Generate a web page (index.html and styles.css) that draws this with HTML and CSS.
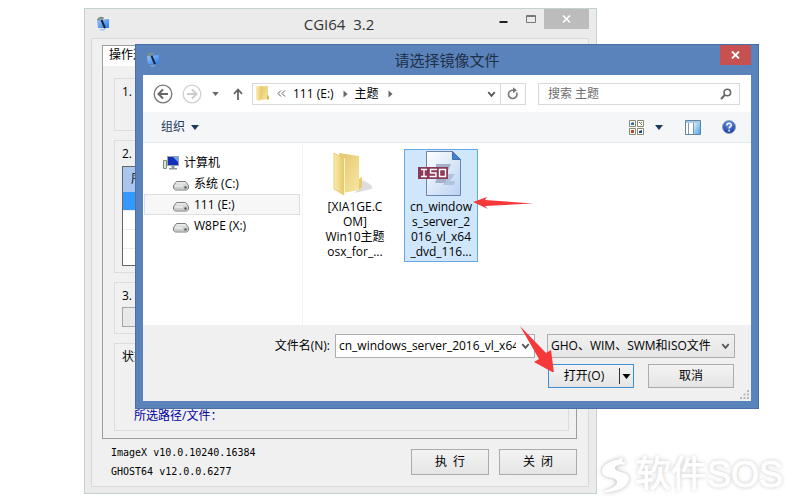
FILE: index.html
```html
<!DOCTYPE html>
<html lang="zh-CN">
<head>
    <meta charset="UTF-8">
    <meta name="viewport" content="width=device-width, initial-scale=1.0">
    <title>CGI64 3.2</title>
    <link rel="stylesheet" href="styles.css">
</head>
<body>
    <svg class="defs" width="0" height="0" aria-hidden="true">
        <defs>
            <linearGradient id="appBlue" x1="0" y1="0" x2="1" y2="1">
                <stop offset="0" stop-color="#9cc8fa"/>
                <stop offset="1" stop-color="#2f7bea"/>
            </linearGradient>
            <linearGradient id="driveTop" x1="0" y1="0" x2="0" y2="1">
                <stop offset="0" stop-color="#f4f4f4"/>
                <stop offset="1" stop-color="#a9abad"/>
            </linearGradient>
            <linearGradient id="folderFront" x1="0" y1="0" x2="1" y2="0">
                <stop offset="0" stop-color="#fbeeb0"/>
                <stop offset="1" stop-color="#e6c765"/>
            </linearGradient>
            <linearGradient id="folderBack" x1="0" y1="0" x2="1" y2="1">
                <stop offset="0" stop-color="#e3c66c"/>
                <stop offset="1" stop-color="#f7e6a2"/>
            </linearGradient>
            <linearGradient id="page" x1="0" y1="0" x2="1" y2="1">
                <stop offset="0" stop-color="#ffffff"/>
                <stop offset="1" stop-color="#b9d2f2"/>
            </linearGradient>
            <linearGradient id="pane" x1="0" y1="0" x2="1" y2="1">
                <stop offset="0" stop-color="#d8f0fd"/>
                <stop offset="1" stop-color="#4aa3e8"/>
            </linearGradient>
            <radialGradient id="help" cx="0.5" cy="0.3" r="0.7">
                <stop offset="0" stop-color="#6f9bea"/>
                <stop offset="1" stop-color="#16349b"/>
            </radialGradient>
            <symbol id="app" viewBox="0 0 14 16">
                <path d="M1 4l12-1v9H2z" fill="url(#appBlue)"/>
                <path d="M1 4c1-3 4-4 7-2.500l-1 2-2-.5-2 1.500z" fill="#7d9090"/>
                <path d="M4.500 4l2-.5L10 12l-2 .5z" fill="#17263a"/>
                <path d="M3 13l7-.5-2 2.500H5z" fill="#7fb0f3" opacity=".5"/>
            </symbol>
            <symbol id="drive" viewBox="0 0 16 11">
                <path d="M3.500 1.500h9l3 4v3l-2 1.500h-11l-2-1.500v-3z" fill="url(#driveTop)" stroke="#7b7d80"/>
                <path d="M1 5.500h14v3l-1.500 1h-11L1 8.500z" fill="#c9cbcc"/>
                <path d="M11.500 6.500h2v2h-2z" fill="#3d4a44"/>
                <path d="M2 6h8" stroke="#fff"/>
            </symbol>
            <symbol id="chevron" viewBox="0 0 8 8">
                <path d="M.8 2.200L4 5.800l3.200-3.600" fill="none" stroke="#555" stroke-width="1.800"/>
            </symbol>
            <symbol id="down" viewBox="0 0 8 5">
                <path d="M0 0h8L4 5z" fill="currentColor"/>
            </symbol>
            <symbol id="right" viewBox="0 0 5 8">
                <path d="M.5.5v7l4-3.500z" fill="#666"/>
            </symbol>
        </defs>
    </svg>

    <!-- main program window -->
    <section class="window main-window">
        <header class="title-bar">
            <svg class="app-icon" width="14" height="16"><use href="#app"/></svg>
            <h1 class="title">CGI64&nbsp; 3.2</h1>
            <div class="window-buttons">
                <button class="win-btn" aria-label="最小化">
                    <svg width="9" height="10" viewBox="0 0 9 10"><path d="M.5 7h8v2h-8z" fill="#222"/></svg>
                </button>
                <button class="win-btn" aria-label="最大化">
                    <svg width="10" height="8" viewBox="0 0 10 8"><path d="M.5.5h9v7h-9zM.5 1.500h9" fill="none" stroke="#777"/></svg>
                </button>
                <button class="win-btn win-close" aria-label="关闭窗口">
                    <svg width="9" height="8" viewBox="0 0 9 8"><path d="M1 .5l7 7M8 .5l-7 7" stroke="#fff" stroke-width="1.600"/></svg>
                </button>
            </div>
        </header>
        <div class="client">
            <div class="tab-panel">
                <div class="tab-head">操作选</div>
                <div class="groups">
                    <div class="group group-backup">1. 请</div>
                    <div class="group group-disk">
                        <span>2. 请</span>
                        <div class="disk-list">
                            <div class="disk-head">序</div>
                            <div class="disk-row disk-selected"></div>
                            <div class="disk-row"></div>
                            <div class="disk-row"></div>
                            <div class="disk-row"></div>
                        </div>
                    </div>
                    <div class="group group-path">
                        <span>3. 请</span>
                        <div class="path-box"></div>
                    </div>
                    <div class="group group-status">
                        <span>状态</span>
                        <p class="status-line">所选路径/文件：</p>
                    </div>
                </div>
            </div>
            <footer class="main-footer">
                <div class="versions">
                    <p>ImageX v10.0.10240.16384</p>
                    <p>GHOST64 v12.0.0.6277</p>
                </div>
                <button class="btn main-btn">执&nbsp; 行</button>
                <button class="btn main-btn">关&nbsp; 闭</button>
            </footer>
        </div>
    </section>

    <!-- file picker -->
    <section class="window dialog">
        <header class="dialog-title">
            <svg class="app-icon" width="14" height="16"><use href="#app"/></svg>
            <h2 class="title">请选择镜像文件</h2>
            <button class="dialog-close" aria-label="关闭对话框">
                <svg width="9" height="8" viewBox="0 0 9 8"><path d="M1 .5l7 7M8 .5l-7 7" stroke="#fff" stroke-width="1.800"/></svg>
            </button>
        </header>
        <div class="dialog-client">
            <nav class="nav-row">
                <button class="icon-btn" aria-label="后退">
                    <svg width="20" height="20" viewBox="0 0 20 20"><circle cx="10" cy="10" r="8.800" fill="#fff" stroke="#777" stroke-width="1.300"/><path d="M15 10H6M10 5.500L5.500 10l4.500 4.500" fill="none" stroke="#666" stroke-width="2"/></svg>
                </button>
                <button class="icon-btn" aria-label="前进">
                    <svg width="20" height="20" viewBox="0 0 20 20"><circle cx="10" cy="10" r="8.800" fill="#fff" stroke="#d0d0d0" stroke-width="1.300"/><path d="M5 10h9M10 5.500l4.500 4.500-4.500 4.500" fill="none" stroke="#ccc" stroke-width="2"/></svg>
                </button>
                <button class="icon-btn history" aria-label="历史记录">
                    <svg width="7" height="4"><use href="#down"/></svg>
                </button>
                <button class="icon-btn" aria-label="向上">
                    <svg width="10" height="12" viewBox="0 0 10 12"><path d="M5 12V2M1 5.800L5 1.500l4 4.300" fill="none" stroke="#666" stroke-width="1.800"/></svg>
                </button>
                <div class="address">
                    <svg width="15" height="17" viewBox="0 0 15 17">
                        <path d="M5 1.500l8-.5v13l-6 1z" fill="url(#folderBack)"/>
                        <path d="M1 1.500l6-.5v13l-3 2-3-1.500z" fill="url(#folderFront)"/>
                        <path d="M12 10l2 1v3l-2 1z" fill="#d8b850"/>
                    </svg>
                    <svg width="9" height="7" viewBox="0 0 9 7"><path d="M4 .5l-3 3 3 3M8 .5l-3 3 3 3" fill="none" stroke="#555"/></svg>
                    <span>111 (E:)</span>
                    <svg width="5" height="8"><use href="#right"/></svg>
                    <span>主题</span>
                    <svg width="5" height="8"><use href="#right"/></svg>
                    <svg class="address-drop" width="9" height="8"><use href="#chevron"/></svg>
                    <button class="refresh" aria-label="刷新">
                        <svg width="12" height="13" viewBox="0 0 12 13"><path d="M9.500 5.500A4.200 4.200 0 1 1 5 3.200h3" fill="none" stroke="#777" stroke-width="1.600"/><path d="M6 .2l4 3-4 3z" fill="#777"/></svg>
                    </button>
                </div>
                <div class="search">
                    <input type="search" placeholder="搜索 主题" aria-label="搜索 主题">
                    <svg width="12" height="12" viewBox="0 0 12 12"><circle cx="7.300" cy="4.500" r="3.300" fill="none" stroke="#666" stroke-width="1.600"/><path d="M4.800 7L1 11" stroke="#666" stroke-width="2"/></svg>
                </div>
            </nav>
            <div class="toolbar">
                <button class="organize">组织 <svg width="8" height="5"><use href="#down"/></svg></button>
                <div class="tools">
                    <button class="icon-btn" aria-label="更改视图">
                        <svg width="15" height="15" viewBox="0 0 15 15">
                            <path d="M.5.5h6v6h-6zM8.500.5h6v6h-6zM.5 8.500h6v6h-6zM8.500 8.500h6v6h-6z" fill="#fff" stroke="#8a8a70"/>
                            <path d="M2 3l2-1 1 1v2H2z" fill="#2a6fa0"/>
                            <path d="M10 2l3 3M13 2l-2 2" stroke="#5a8a50"/>
                            <path d="M2 10h3v3H2z" fill="#c8451c"/>
                            <path d="M10 11l3-1v3h-3z" fill="#1c4c86"/>
                        </svg>
                    </button>
                    <button class="icon-btn views-drop" aria-label="更多视图">
                        <svg width="8" height="5"><use href="#down"/></svg>
                    </button>
                    <button class="icon-btn preview" aria-label="预览窗格">
                        <svg width="16" height="15" viewBox="0 0 16 15">
                            <path d="M.5.5h15v14H.5z" fill="#fff" stroke="#5f84a3"/>
                            <path d="M1 1h14v2H1z" fill="#a9c9e2"/>
                            <path d="M9 3h6v11H9z" fill="url(#pane)"/>
                            <path d="M3.500 3v11M8.500 3v11" stroke="#8298aa"/>
                        </svg>
                    </button>
                    <button class="icon-btn" aria-label="帮助">
                        <svg width="14" height="14" viewBox="0 0 14 14">
                            <circle cx="7" cy="7" r="6.500" fill="url(#help)" stroke="#8fa3c8"/>
                            <path d="M4.800 5.400C4.800 2.500 9.400 2.600 9.300 5.200 9.200 6.700 7.100 6.700 7.100 8.600M7.100 9.800v1.600" fill="none" stroke="#fff" stroke-width="1.500"/>
                        </svg>
                    </button>
                </div>
            </div>
            <div class="browser">
                <ul class="tree">
                    <li class="tree-root">
                        <svg width="17" height="14" viewBox="0 0 17 14">
                            <path d="M.5 4.500h3v8h-3z" fill="#dce6d8" stroke="#7d8a80"/>
                            <path d="M4.500.5h11v9h-11z" fill="#1430b8" stroke="#9aa2ae"/>
                            <path d="M10 1h5v5z" fill="#6ea0f4"/>
                            <path d="M8.500 10h3v2h-3zM6 12h8v1.500H6z" fill="#8c949c"/>
                        </svg>
                        计算机
                    </li>
                    <li><svg width="16" height="11"><use href="#drive"/></svg>系统 (C:)</li>
                    <li class="tree-current"><svg width="16" height="11"><use href="#drive"/></svg>111 (E:)</li>
                    <li><svg width="16" height="11"><use href="#drive"/></svg>W8PE (X:)</li>
                </ul>
                <div class="files">
                    <div class="file">
                        <svg width="48" height="48" viewBox="0 0 48 48">
                            <path d="M24 43l16-4c4-2-2-6-8-9z" fill="#aaa" opacity=".4"/>
                            <path d="M8 3l20 3v34l-16 3z" fill="url(#folderBack)"/>
                            <path d="M28 29l3-2v10l-3 3z" fill="#e5ca72"/>
                            <path d="M3 3l10 6v36L3 39z" fill="url(#folderFront)" stroke="#e5cd7a"/>
                            <path d="M13 9l1-1v35l-1 2z" fill="#fff3c4"/>
                        </svg>
                        <span>[XIA1GE.C<br>OM]<br>Win10主题<br>osx_for_...</span>
                    </div>
                    <div class="file file-selected">
                        <svg width="56" height="48" viewBox="0 0 56 48">
                            <path d="M13.500 1.500h26l8 8v36h-34z" fill="url(#page)" stroke="#6c84ad"/>
                            <path d="M39.500 1.500v8h8z" fill="#3b84d8" stroke="#4a6ea8"/>
                            <path d="M23 14h15l-2 5-7 9h5l-1 5H22l2-5 7-9h-8z" fill="#a3b2ca"/>
                            <path d="M32 24h10l-5 7h5l-1 4H30l5-7h-4z" fill="#b0c2de"/>
                            <path d="M5 17h30v12H5z" fill="#8b3a58"/>
                            <path d="M8 19.500h6M11 19.500v7M8 26.500h6M24 19.500h-6.500v3.500H23v3.500h-6.500M26.500 19.500h6v7h-6z" fill="none" stroke="#fff" stroke-width="1.400"/>
                        </svg>
                        <span>cn_window<br>s_server_2<br>016_vl_x64<br>_dvd_116...</span>
                        <svg class="arrow-left" width="60" height="14" viewBox="0 0 60 14">
                            <path d="M0 6L14 1l-2 3 48 3.500L12 10l3 3z" fill="#f5383a"/>
                        </svg>
                    </div>
                </div>
            </div>
            <div class="dialog-footer">
                <div class="field-row">
                    <label for="fileName">文件名(N):</label>
                    <div class="combo">
                        <input id="fileName" type="text" value="cn_windows_server_2016_vl_x64_dvd_11636695.iso">
                        <svg width="9" height="8"><use href="#chevron"/></svg>
                    </div>
                    <div class="filter">
                        <select aria-label="文件类型">
                            <option>GHO、WIM、SWM和ISO文件</option>
                        </select>
                        <svg width="9" height="8"><use href="#chevron"/></svg>
                    </div>
                </div>
                <div class="action-row">
                    <div class="open-wrap">
                        <button class="btn open-btn">
                            <span>打开(O)</span>
                            <svg width="9" height="5"><use href="#down"/></svg>
                        </button>
                        <svg class="arrow-down" width="34" height="46" viewBox="0 0 34 46">
                            <path d="M0 0l26 27 5-3 3 23-20-11 5-3z" fill="#f5383a"/>
                        </svg>
                    </div>
                    <button class="btn cancel-btn">取消</button>
                </div>
                <svg class="grip" width="9" height="9" viewBox="0 0 9 9">
                    <path d="M7 0h2v2H7zM3.500 3.500h2v2h-2zM7 3.500h2v2H7zM0 7h2v2H0zM3.500 7h2v2h-2zM7 7h2v2H7z" fill="#b8b8b8"/>
                </svg>
            </div>
        </div>
    </section>

    <div class="watermark">
        <svg width="32" height="38" viewBox="0 0 32 38">
            <path d="M22 3C12 4 2 9 3 16c1 7 15 4 15 10 0 4-7 7-15 10 13 1 26-4 27-13 1-8-14-6-14-11 0-2 3-3 7-4z" fill="#fff"/>
            <path d="M21 1l3 2-1 3 4-1-2 4-4-1-1-3z" fill="#fff"/>
        </svg>
        <span>软件SOS</span>
    </div>
</body>
</html>
```
FILE: styles.css
```css
* {
    box-sizing: border-box;
}
body {
    margin: 0;
    background-color: #ffffff;
    color: #000;
    font-family: "Open Sans", "Noto Sans CJK SC", sans-serif;
    font-size: 12px;
    line-height: 16px;
}
h1, h2, p, ul {
    margin: 0;
    padding: 0;
}
svg {
    display: block;
    flex: none;
}
.defs {
    position: absolute;
}
button {
    font: inherit;
    color: inherit;
    border: none;
    background: none;
    padding: 0;
}
input, select {
    font: inherit;
    color: inherit;
    border: none;
    outline: none;
    background: none;
    padding: 0;
    min-width: 0;
}
.window {
    position: absolute;
}
.title {
    flex: 1;
    text-align: center;
    font-size: 15px;
    font-weight: normal;
    line-height: 20px;
}

/* main window */
.main-window {
    top: 8px;
    left: 84px;
    right: 199px;
    background-color: #ebebeb;
    border: 1px solid #c3d3cb;
    padding: 0 7px 6px 6px;
}
.title-bar {
    display: flex;
    align-items: center;
    height: 29px;
    padding-left: 5px;
    color: #333;
}
.title-bar .title {
    padding-left: 78px;
}
.window-buttons {
    display: flex;
    align-self: flex-start;
}
.win-btn {
    display: flex;
    align-items: center;
    justify-content: center;
    width: 27px;
    height: 20px;
}
.win-close {
    width: 45px;
    background-color: #bcbcbc;
}
.client {
    background-color: #f0f0f0;
    border: 1px solid #d9d9d9;
    padding: 6px 11px 5px 10px;
}
.tab-panel {
    border: 1px solid #9d9d9d;
    background-color: #f0f0f0;
}
.tab-head {
    height: 20px;
    padding: 1px 6px;
    background-color: #ffffff;
}
.groups {
    display: flex;
    flex-direction: column;
    gap: 9px;
    padding: 12px 7px 7px 11px;
}
.group {
    border: 1px solid #dcdcdc;
    padding: 5px 6px 5px 7px;
}
.group-backup {
    height: 53px;
}
.group-disk {
    height: 133px;
}
.group-path {
    height: 52px;
}
.group-status {
    height: 88px;
}
.disk-list {
    height: 100px;
    margin-top: 4px;
    border: 1px solid #666;
    background-color: #ffffff;
}
.disk-head {
    height: 25px;
    padding: 4px 8px;
    background-color: #aac6f0;
}
.disk-row {
    height: 19px;
    border-bottom: 1px solid #ececec;
}
.disk-row:last-child {
    border-bottom: none;
}
.disk-selected {
    background-color: #3399ff;
}
.path-box {
    height: 20px;
    margin-top: 3px;
    border: 1px solid #a5a5a5;
    background-color: #e8e8e8;
}
.status-line {
    padding: 43px 0 0 12px;
    color: #0000a0;
}
.main-footer {
    display: flex;
    align-items: center;
    gap: 10px;
    padding-top: 4px;
}
.versions {
    flex: 1;
    padding-left: 9px;
    font-family: "DejaVu Sans Mono", monospace;
    font-size: 10px;
    line-height: 19px;
}
.btn {
    border: 1px solid #acacac;
    background: linear-gradient(#f3f3f3, #e5e5e5);
}
.main-btn {
    width: 78px;
    height: 26px;
}

/* file dialog */
.dialog {
    top: 44px;
    left: 135px;
    right: 37px;
    padding: 0 7px 7px;
    background-color: #5a82bb;
    border: 1px solid #4a6fa5;
}
.dialog-title {
    display: flex;
    align-items: center;
    height: 30px;
    padding-left: 3px;
    color: #1f2f45;
}
.dialog-title .title {
    padding-left: 14px;
}
.dialog-close {
    display: flex;
    align-items: center;
    justify-content: center;
    align-self: flex-start;
    width: 31px;
    height: 20px;
    background-color: #c75050;
}
.dialog-client {
    background-color: #ffffff;
}
.nav-row {
    display: flex;
    align-items: center;
    height: 37px;
    padding: 0 11px 0 10px;
    gap: 9px;
}
.icon-btn {
    display: flex;
    align-items: center;
    color: #1d3a5c;
}
.history {
    padding: 0 5px 0 1px;
    color: #666;
}
.address {
    flex: 1;
    display: flex;
    align-items: center;
    gap: 7px;
    height: 22px;
    padding-left: 2px;
    border: 1px solid #d9d9d9;
}
.address span {
    padding-right: 2px;
    white-space: nowrap;
}
.address-drop {
    margin-left: auto;
}
.refresh {
    display: flex;
    align-items: center;
    justify-content: center;
    align-self: stretch;
    width: 25px;
    border-left: 1px solid #d9d9d9;
    margin-left: -3px;
}
.search {
    display: flex;
    align-items: center;
    width: 202px;
    height: 22px;
    margin-left: 3px;
    padding: 0 7px 0 9px;
    border: 1px solid #d9d9d9;
}
.search input {
    flex: 1;
}
.search input::placeholder {
    color: #6d6d6d;
}
.toolbar {
    display: flex;
    align-items: center;
    justify-content: space-between;
    height: 31px;
    padding: 0 15px 0 18px;
    background-color: #f4f6f8;
    border-bottom: 1px solid #dfe7ef;
}
.organize {
    display: flex;
    align-items: center;
    gap: 6px;
    color: #1e395b;
}
.tools {
    display: flex;
    align-items: center;
}
.views-drop {
    padding: 0 22px 0 11px;
}
.preview {
    padding-right: 21px;
}
.browser {
    display: flex;
    height: 182px;
}
.tree {
    width: 160px;
    padding-top: 9px;
    border-right: 1px solid #f3f3f3;
    list-style: none;
}
.tree li {
    display: flex;
    align-items: center;
    gap: 5px;
    height: 21px;
    margin: 0 2px 0 1px;
    padding-left: 28px;
    border: 1px solid transparent;
}
.tree li svg {
    margin-top: 4px;
}
.tree .tree-root {
    gap: 4px;
    padding-left: 18px;
}
.tree .tree-root svg {
    margin-top: 0;
}
.tree .tree-current {
    background-color: #f7f7f7;
    border-color: #dedede;
}
.files {
    display: flex;
    align-items: flex-start;
    gap: 12px;
    padding: 6px 15px;
}
.file {
    position: relative;
    display: flex;
    flex-direction: column;
    align-items: center;
    gap: 1px;
    width: 74px;
    height: 113px;
    border: 1px solid transparent;
    text-align: center;
    line-height: 15px;
    white-space: nowrap;
}
.file-selected {
    border-color: #66a7e8;
    background-color: #cfe6fb;
}
.arrow-left {
    position: absolute;
    left: 68px;
    top: 46px;
}
.dialog-footer {
    position: relative;
    padding: 9px 16px 13px;
    background-color: #f0f0f0;
}
.field-row, .action-row {
    display: flex;
    align-items: center;
    justify-content: flex-end;
}
.field-row label {
    margin-right: 5px;
}
.combo {
    display: flex;
    align-items: center;
    width: 200px;
    height: 24px;
    margin-right: 12px;
    padding: 0 4px 0 3px;
    border: 1px solid #abadb3;
    background-color: #ffffff;
}
.combo input {
    width: 177px;
    margin-right: auto;
}
.filter {
    display: flex;
    align-items: center;
    width: 188px;
    height: 24px;
    padding: 0 4px 0 3px;
    border: 1px solid #acacac;
    background: linear-gradient(#f0f0f0, #e5e5e5);
}
.filter select {
    appearance: none;
    flex: 1;
    margin-right: 5px;
    overflow: hidden;
    text-overflow: clip;
}
.action-row {
    gap: 14px;
    padding: 6px 1px 0 0;
}
.open-wrap {
    position: relative;
}
.open-btn {
    display: flex;
    align-items: center;
    width: 86px;
    height: 24px;
    border-color: #3c8fd4;
}
.open-btn span {
    flex: 1;
    text-align: center;
    border-right: 1px solid #333;
}
.open-btn svg {
    margin: 0 2px;
}
.cancel-btn {
    width: 86px;
    height: 24px;
}
.arrow-down {
    position: absolute;
    left: -28px;
    top: -38px;
}
.grip {
    position: absolute;
    right: 2px;
    bottom: 2px;
}

.watermark {
    position: absolute;
    right: 13px;
    top: 454px;
    display: flex;
    align-items: center;
    gap: 4px;
    color: #ffffff;
    font-family: "Liberation Sans", "Noto Sans CJK SC", sans-serif;
    font-size: 36px;
    line-height: 42px;
    -webkit-text-stroke: 1px #ffffff;
    text-shadow: 0 0 4px #b4b4b4;
}
.watermark svg {
    filter: drop-shadow(0 0 2px #b4b4b4);
}
```
